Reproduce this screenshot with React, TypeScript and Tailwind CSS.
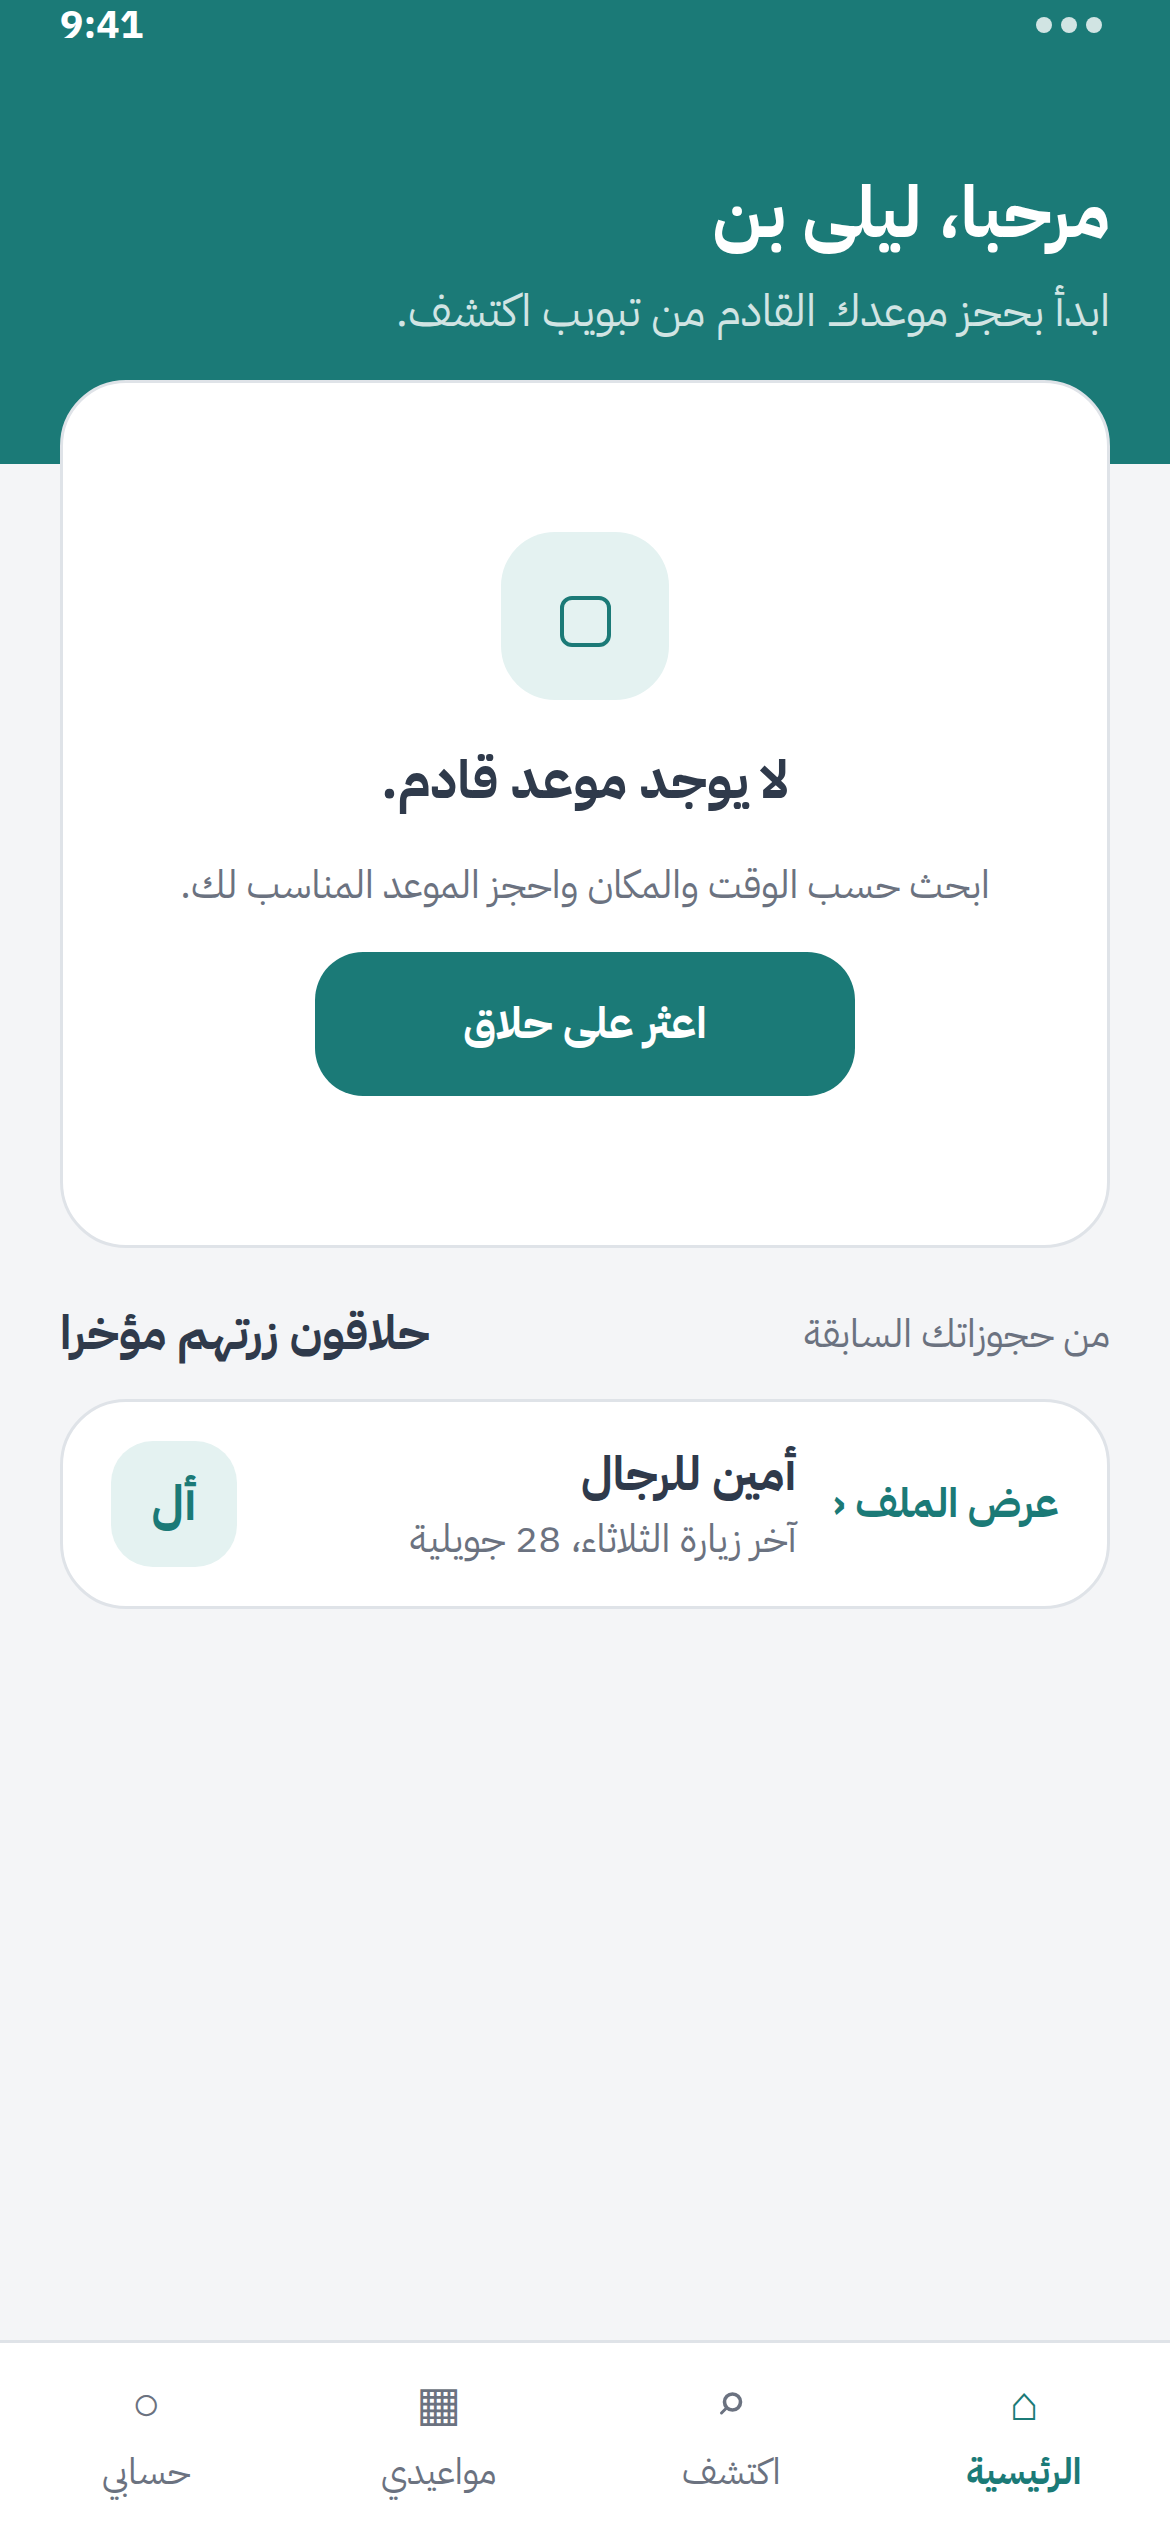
const SearchIcon = () => (
  <svg viewBox="0 0 66 66" className="size-[66px]" fill="none" stroke="currentColor" strokeWidth="3.6">
    <circle cx="34.5" cy="31" r="8" />
    <path d="M28.5 37 L23.5 42" strokeLinecap="round" strokeWidth="3" />
  </svg>
);

const tabs = [
  { label: "الرئيسية", icon: "⌂", active: true },
  { label: "اكتشف", icon: <SearchIcon />, active: false },
  { label: "مواعيدي", icon: "▦", active: false },
  { label: "حسابي", icon: "○", active: false },
];

export default function App() {
  return (
    <div dir="rtl" className="flex h-[2532px] w-[1170px] flex-col overflow-hidden bg-[#f4f5f7] font-['IBM_Plex_Sans_Arabic',sans-serif] text-[#2f3a4b]">
      <header className="h-[464px] shrink-0 bg-[#1b7a77] px-[60px] text-white">
        <div dir="ltr" className="flex h-[48px] items-center justify-between pt-[2px]">
          <span className="text-[39px] font-bold leading-[46px]">9:41</span>
          <div className="mr-[8px] flex gap-[9px] opacity-80">
            <span className="size-[16px] rounded-full bg-white" />
            <span className="size-[16px] rounded-full bg-white" />
            <span className="size-[16px] rounded-full bg-white" />
          </div>
        </div>
        <h1 className="mt-[120px] text-[71px] font-bold leading-[90px]">مرحبا، ليلى بن</h1>
        <p className="mt-[20px] text-[45px] leading-[66px] text-[#d1e4e3]">ابدأ بحجز موعدك القادم من تبويب اكتشف.</p>
      </header>

      <main className="flex-1 px-[60px]">
        <section className="-mt-[84px] flex h-[868px] flex-col items-center rounded-[66px] border-[3px] border-[#dfe3e8] bg-white pt-[149px]">
          <div className="flex size-[168px] items-center justify-center rounded-[54px] bg-[#e4f2f1]">
            <span className="mt-[10px] size-[51px] rounded-[12px] border-[4px] border-[#1b7a77]" />
          </div>
          <h2 className="mt-[38px] text-[53px] font-bold leading-[84px]">لا يوجد موعد قادم.</h2>
          <p className="mt-[33px] text-[39px] leading-[60px] text-[#6b7280]">ابحث حسب الوقت والمكان واحجز الموعد المناسب لك.</p>
          <button className="mt-[37px] h-[144px] w-[540px] rounded-[48px] bg-[#1b7a77] text-[43.5px] font-bold text-white">اعثر على حلاق</button>
        </section>

        <div className="mt-[50px] flex h-[72px] items-center justify-between">
          <span className="text-[39px] text-[#6b7280]">من حجوزاتك السابقة</span>
          <h3 className="text-[47px] font-bold">حلاقون زرتهم مؤخرا</h3>
        </div>

        <section className="mt-[29px] flex h-[210px] items-center rounded-[66px] border-[3px] border-[#dfe3e8] bg-white px-[48px]">
          <span className="text-[41px] font-bold text-[#1b7a77]">عرض الملف ‹</span>
          <div className="mr-[36px] flex-1">
            <div className="text-[47px] font-bold leading-[70px]">أمين للرجال</div>
            <div className="text-[39px] leading-[58px] text-[#6b7280]">آخر زيارة الثلاثاء، 28 جويلية</div>
          </div>
          <div className="flex size-[126px] items-center justify-center rounded-[42px] bg-[#e4f2f1] text-[48px] font-bold text-[#1b7a77]">أل</div>
        </section>
      </main>

      <nav className="grid h-[192px] shrink-0 grid-cols-4 border-t-[3px] border-[#dfe3e8] bg-white pt-[28px]">
        {tabs.map((tab) => (
          <div key={tab.label} className={`flex flex-col items-center ${tab.active ? "font-bold text-[#1b7a77]" : "text-[#6b7280]"}`}>
            <span className="h-[66px] text-[48px] font-normal leading-[66px]">{tab.icon}</span>
            <span className="mt-[11px] text-[36px] leading-[48px]">{tab.label}</span>
          </div>
        ))}
      </nav>
    </div>
  );
}
